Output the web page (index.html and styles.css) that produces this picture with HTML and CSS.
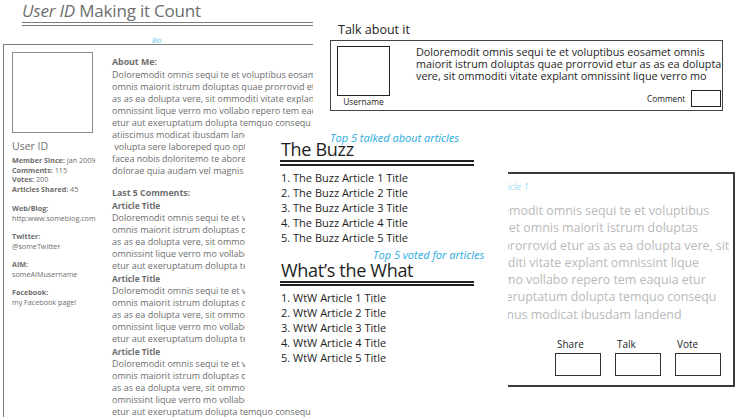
FILE: index.html
```html
<!DOCTYPE html>
<html lang="en">
<head>
    <meta charset="UTF-8">
    <meta name="viewport" content="width=device-width, initial-scale=1.0">
    <title>User ID - Making it Count</title>
    <link rel="stylesheet" href="styles.css">
</head>
<body>
    <h1 class="page-title"><em>User ID</em> Making it Count</h1>
    <div class="double-rule title-rule"></div>
    <div class="bio-label">Bio</div>

    <section class="bio">
        <aside class="bio-side">
            <div class="avatar"></div>
            <h2 class="user-name">User ID</h2>
            <ul class="stats">
                <li><b>Member Since:</b> Jan 2009</li>
                <li><b>Comments:</b> 115</li>
                <li><b>Votes:</b> 200</li>
                <li><b>Articles Shared:</b> 45</li>
            </ul>
            <dl class="contact">
                <dt>Web/Blog:</dt>
                <dd>http:www.someblog.com</dd>
                <dt>Twitter:</dt>
                <dd>@someTwitter</dd>
                <dt>AIM:</dt>
                <dd>someAIMusername</dd>
                <dt>Facebook:</dt>
                <dd>my Facebook page!</dd>
            </dl>
        </aside>

        <div class="bio-main">
            <h3>About Me:</h3>
            <p>Doloremodit omnis sequi te et voluptibus eosamet<br>
            omnis maiorit istrum doluptas quae prorrovid etur<br>
            as as ea dolupta vere, sit ommoditi vitate explant<br>
            omnissint lique verro mo vollabo repero tem eaquia<br>
            etur aut exeruptatum dolupta temquo consequ<br>
            atiiscimus modicat ibusdam landend<br>
            &nbsp;volupta sere laboreped quo optatem<br>
            facea nobis doloritemo te aborem<br>
            dolorae quia audam vel magnis</p>

            <h3 class="comments-head">Last 5 Comments:</h3>
            <div class="comment">
                <h4>Article Title</h4>
                <p>Doloremodit omnis sequi te et voluptibus<br>
                omnis maiorit istrum doluptas quae<br>
                as as ea dolupta vere, sit ommoditi<br>
                omnissint lique verro mo vollabo<br>
                etur aut exeruptatum dolupta temquo consequ</p>
            </div>
            <div class="comment">
                <h4>Article Title</h4>
                <p>Doloremodit omnis sequi te et voluptibus<br>
                omnis maiorit istrum doluptas quae<br>
                as as ea dolupta vere, sit ommoditi<br>
                omnissint lique verro mo vollabo<br>
                etur aut exeruptatum dolupta temquo consequ</p>
            </div>
            <div class="comment">
                <h4>Article Title</h4>
                <p>Doloremodit omnis sequi te et voluptibus<br>
                omnis maiorit istrum doluptas quae<br>
                as as ea dolupta vere, sit ommoditi<br>
                omnissint lique verro mo vollabo<br>
                etur aut exeruptatum dolupta temquo consequ</p>
            </div>
        </div>
    </section>

    <section class="talk">
        <h2>Talk about it</h2>
        <div class="talk-box">
            <div class="talk-user">
                <div class="avatar-sm"></div>
                <span>Username</span>
            </div>
            <div class="talk-body">
                <p>Doloremodit omnis sequi te et voluptibus eosamet omnis<br>
                maiorit istrum doluptas quae prorrovid etur as as ea dolupta<br>
                vere, sit ommoditi vitate explant omnissint lique verro mo</p>
                <div class="comment-field">
                    <span>Comment</span>
                    <span class="field"></span>
                </div>
            </div>
        </div>
    </section>

    <section class="article">
        <div class="article-label">Article 1</div>
        <p>Doloremodit omnis sequi te et voluptibus<br>
        eosamet omnis maiorit istrum doluptas<br>
        quae prorrovid etur as as ea dolupta vere, sit<br>
        ommoditi vitate explant omnissint lique<br>
        verro mo vollabo repero tem eaquia etur<br>
        aut exeruptatum dolupta temquo consequ<br>
        atiiscimus modicat ibusdam landend</p>
        <div class="actions">
            <div class="action"><span>Share</span><div class="field"></div></div>
            <div class="action"><span>Talk</span><div class="field"></div></div>
            <div class="action"><span>Vote</span><div class="field"></div></div>
        </div>
    </section>

    <section class="buzz">
        <div class="buzz-note">Top 5 talked about articles</div>
        <h2>The Buzz</h2>
        <div class="double-rule buzz-rule"></div>
        <ol>
            <li>The Buzz Article 1 Title</li>
            <li>The Buzz Article 2 Title</li>
            <li>The Buzz Article 3 Title</li>
            <li>The Buzz Article 4 Title</li>
            <li>The Buzz Article 5 Title</li>
        </ol>

        <div class="buzz-note voted">Top 5 voted for articles</div>
        <h2>What’s the What</h2>
        <div class="double-rule buzz-rule"></div>
        <ol>
            <li>WtW Article 1 Title</li>
            <li>WtW Article 2 Title</li>
            <li>WtW Article 3 Title</li>
            <li>WtW Article 4 Title</li>
            <li>WtW Article 5 Title</li>
        </ol>
    </section>
</body>
</html>
```

FILE: styles.css
```css
:root {
    --ink: #1e1e1e;
    --muted: #6e6e6e;
    --faded: #b9b9b9;
    --line: #7c7c7c;
    --note: #29abe2;
}

body {
    margin: 0;
    width: 742px;
    height: 417px;
    overflow: hidden;
    position: relative;
    font-family: "Open Sans", "Liberation Sans", sans-serif;
    color: var(--ink);
    background: #fff;
}

h1, h2, h3, h4, p, ul, ol, dl, dd {
    margin: 0;
    padding: 0;
}

/* page header */

.page-title {
    padding-left: 22px;
    font-size: 17px;
    font-weight: 400;
    letter-spacing: -0.2px;
    line-height: 22px;
    color: var(--muted);
}

.double-rule {
    height: 2px;
    border-top: 1px solid var(--line);
    border-bottom: 1px solid var(--line);
}

.title-rule {
    margin: 0 0 0 22px;
    width: 291px;
}

.bio-label {
    padding-left: 152px;
    margin-top: 10px;
    height: 8px;
    font-size: 6.5px;
    font-style: italic;
    color: #5cc3f0;
    line-height: 9px;
}

/* bio panel */

.bio {
    margin-left: 3px;
    width: 310px;
    height: 380px;
    box-sizing: border-box;
    border-top: 1.5px solid var(--line);
    border-left: 1.5px solid var(--line);
    overflow: hidden;
    display: grid;
    grid-template-columns: 108px 1fr;
    padding-top: 7px;
    color: var(--muted);
}

.bio-side {
    padding-left: 8px;
}

.avatar {
    width: 79px;
    height: 79px;
    border: 1px solid #8c8c8c;
}

.user-name {
    margin-top: 6px;
    font-size: 10.5px;
    font-weight: 400;
    line-height: 14px;
}

.stats {
    list-style: none;
    margin-top: 3px;
    font-size: 7.2px;
    line-height: 9.7px;
}

.stats b, .contact dt {
    font-weight: 700;
}

.contact {
    font-size: 7.2px;
    line-height: 10px;
}

.contact dt {
    margin-top: 8px;
}

.bio-main {
    padding-top: 4px;
    white-space: nowrap;
}

.bio-main h3 {
    font-size: 8.8px;
    font-weight: 700;
    line-height: 12px;
}

.bio-main p {
    margin-top: 1px;
    font-size: 9px;
    line-height: 12px;
}

.bio-main .comments-head {
    margin-top: 10px;
}

.comment h4 {
    margin-top: 1px;
    font-size: 8.4px;
    font-weight: 700;
    line-height: 12px;
}

.comment p {
    margin-top: 0;
}

/* talk panel */

.talk {
    position: absolute;
    left: 330px;
    top: 20px;
    width: 393px;
}

.talk h2 {
    padding-left: 8px;
    font-size: 12.5px;
    font-weight: 400;
    line-height: 20px;
}

.talk-box {
    height: 71px;
    box-sizing: border-box;
    border: 1.5px solid #444;
    padding: 5px 1px 3px 6px;
    display: flex;
    gap: 26px;
}

.talk-user {
    display: flex;
    flex-direction: column;
    align-items: center;
}

.avatar-sm {
    width: 51px;
    height: 50px;
    border: 1px solid #222;
}

.talk-user span {
    margin-top: 1px;
    font-size: 8.4px;
    line-height: 10px;
}

.talk-body {
    flex: 1;
    display: flex;
    flex-direction: column;
}

.talk-body p {
    font-size: 10.8px;
    line-height: 12px;
    white-space: nowrap;
}

.comment-field {
    margin-top: auto;
    display: flex;
    align-items: center;
    justify-content: flex-end;
    gap: 6px;
    font-size: 8.3px;
}

.comment-field .field {
    width: 28px;
    height: 15px;
    border: 1px solid #222;
}

/* article panel */

.article {
    position: absolute;
    left: 440px;
    top: 172px;
    width: 295px;
    height: 215px;
    box-sizing: border-box;
    border: 2px solid #3a3a3a;
    padding: 6px 12px 9px 28px;
    display: flex;
    flex-direction: column;
    overflow: hidden;
    z-index: 1;
    background: #fff;
}

.article-label {
    padding-left: 25px;
    font-size: 9.5px;
    font-style: italic;
    line-height: 13px;
    color: #a9ddf6;
}

.article p {
    margin-top: 9px;
    font-size: 12.4px;
    line-height: 17.3px;
    color: var(--faded);
    white-space: nowrap;
}

.actions {
    margin-top: auto;
    display: flex;
    justify-content: flex-end;
    gap: 14px;
}

.action {
    display: flex;
    flex-direction: column;
    gap: 2px;
}

.action span {
    padding-left: 2px;
    font-size: 10px;
    line-height: 13px;
}

.action .field {
    width: 44px;
    height: 21px;
    border: 1.5px solid #333;
}

/* buzz panel */

.buzz {
    position: absolute;
    left: 245px;
    top: 131px;
    width: 263px;
    height: 272px;
    box-sizing: border-box;
    padding-left: 36px;
    background: #fff;
    z-index: 2;
}

.buzz-note {
    margin-left: 49px;
    font-size: 11px;
    font-style: italic;
    line-height: 14px;
    color: var(--note);
}

.buzz-note.voted {
    margin-top: 3px;
    margin-left: 92px;
}

.buzz h2 {
    margin-top: -6px;
    font-size: 18px;
    font-weight: 400;
    letter-spacing: -0.3px;
    line-height: 20px;
}

.buzz-note.voted + h2 {
    margin-top: -2px;
}

.buzz-rule {
    margin: 1px 0 0 -1px;
    width: 194px;
    height: 1.5px;
    border-top: 2px solid #222;
    border-bottom: 2px solid #222;
}

.buzz ol {
    margin-top: 4px;
    list-style: none;
    counter-reset: item;
    font-size: 11px;
    line-height: 15px;
}

.buzz li {
    counter-increment: item;
}

.buzz li::before {
    content: counter(item) ". ";
}
```
